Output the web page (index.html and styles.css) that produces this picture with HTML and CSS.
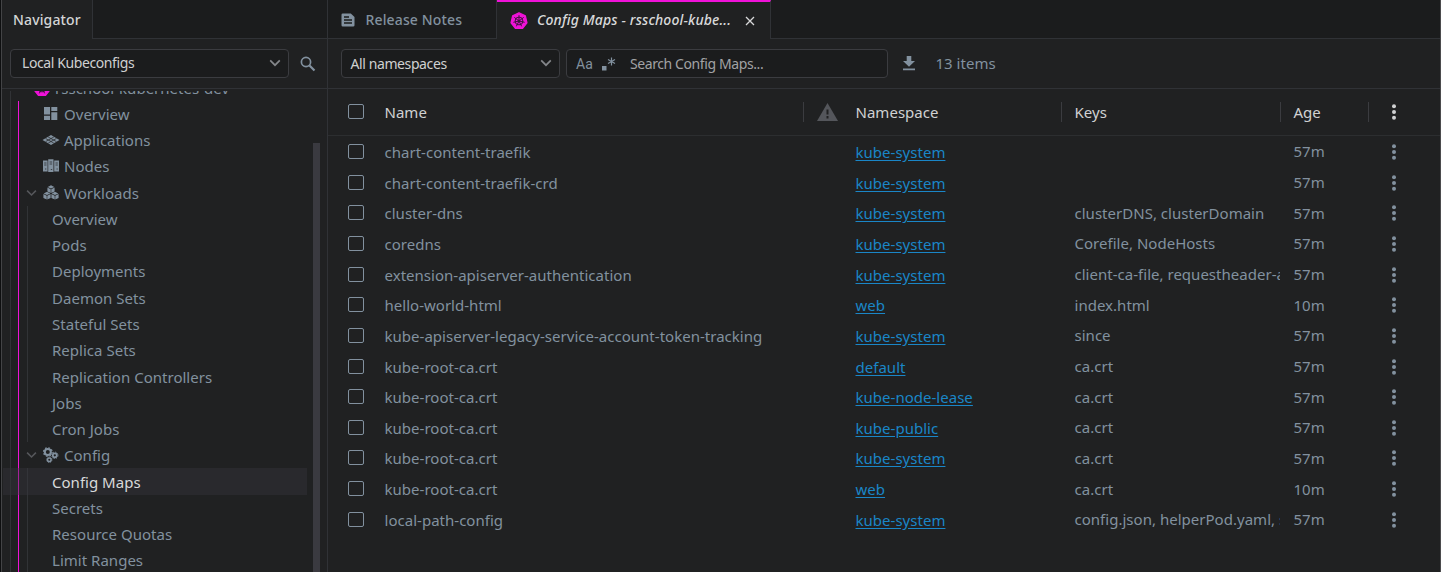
FILE: index.html
```html
<!DOCTYPE html>
<html lang="en">
<head>
<meta charset="utf-8">
<title>Config Maps</title>
<link rel="stylesheet" href="styles.css">
</head>
<body>
<svg class="defs" aria-hidden="true">
  <symbol id="chev" viewBox="0 0 12 8"><path d="M1.2 1.4 6 6.2l4.8-4.8" fill="none" stroke="currentColor" stroke-width="1.7"/></symbol>
  <symbol id="dots" viewBox="0 0 6 18"><g fill="currentColor"><circle cx="3" cy="3.2" r="2"/><circle cx="3" cy="9" r="2"/><circle cx="3" cy="14.8" r="2"/></g></symbol>
  <symbol id="helm" viewBox="0 0 18 18">
    <path d="M9 .8 15.4 3.9 17 10.8 12.6 16.4H5.4L1 10.8 2.6 3.9Z" fill="#f012d8" stroke="#f012d8" stroke-width="1.2" stroke-linejoin="round"/>
    <g fill="none" stroke="#3c123c" stroke-width="1"><circle cx="9" cy="9" r="3.9"/><circle cx="9" cy="9" r=".9"/><path d="M9 3.2V8M9 9l4.7-3.6M9 9l5.6 1.3M9 9l2.6 5.3M9 9l-2.6 5.3M9 9l-5.6 1.3M9 9 4.300 5.400"/></g>
  </symbol>
  <symbol id="cube" viewBox="0 0 8 9"><path d="M4 .2 7.500 2 4 3.800.5 2Z M.2 2.700 3.700 4.500V8.600L.2 6.800Z M7.800 2.700 4.300 4.500V8.600L7.800 6.800Z" fill="currentColor"/></symbol>
</svg>
<div class="app">
  <aside class="navigator">
    <div class="tabs"><div class="tab nav-tab">Navigator</div><div class="tab-fill"></div></div>
    <div class="toolbar nav-toolbar">
      <div class="field source"><span>Local Kubeconfigs</span><svg class="chev"><use href="#chev"/></svg></div>
      <svg class="search" viewBox="0 0 16 16"><g fill="none" stroke="currentColor"><circle cx="6" cy="6" r="4.600" stroke-width="1.700"/><path d="m9.500 9.500 5 5" stroke-width="2.200"/></g></svg>
    </div>
    <div class="tree">
      <div class="row cluster"><svg class="helm"><use href="#helm"/></svg><span>rsschool-kubernetes-dev</span></div>
      <div class="branch">
        <div class="row top"><svg viewBox="0 0 18 16"><path d="M2 1h6v7.500H2zM9.300 1h6v4h-6zM2 9.800h6v4.200H2zM9.300 6.300h6V14h-6z" fill="currentColor"/></svg><span>Overview</span></div>
        <div class="row top"><svg viewBox="0 0 18 16"><path d="M9 3 17.500 8 9 13 .5 8Z" fill="currentColor"/><path d="M3.500 6.400 11.700 11M6.200 5l8.200 4.600M14.500 6.400 6.300 11M11.800 5 3.600 9.600" stroke="#202122" stroke-width=".7"/></svg><span>Applications</span></div>
        <div class="row top"><svg viewBox="0 0 18 16"><path d="M1 2.500h4.600v11H1zM6.200 1.300h5.300v12.700H6.200zM12.200 2.500h4.800v11h-4.800z" fill="currentColor"/><path d="M2.200 5h2.300M2.200 7h2.300M7.600 4h2.600M7.600 6h2.600M13.500 5h2.300M13.500 7h2.300M3 11h1.300M8.800 11.500h1.400M14.500 11h1.300" stroke="#202122" stroke-width=".7"/></svg><span>Nodes</span></div>
        <div class="row top"><svg class="twist"><use href="#chev"/></svg><svg viewBox="0 0 18 16"><use href="#cube" x="5" y="0" width="8" height="8.500"/><use href="#cube" x="1" y="6.500" width="8" height="8.500"/><use href="#cube" x="9" y="6.500" width="8" height="8.500"/></svg><span>Workloads</span></div>
        <div class="sub">
          <div class="row">Overview</div>
          <div class="row">Pods</div>
          <div class="row">Deployments</div>
          <div class="row">Daemon Sets</div>
          <div class="row">Stateful Sets</div>
          <div class="row">Replica Sets</div>
          <div class="row">Replication Controllers</div>
          <div class="row">Jobs</div>
          <div class="row">Cron Jobs</div>
        </div>
        <div class="row top"><svg class="twist"><use href="#chev"/></svg><svg viewBox="0 0 18 16"><g fill="none" stroke="currentColor"><circle cx="5.800" cy="5" r="3" stroke-width="2"/><circle cx="5.800" cy="5" r="4.300" stroke-width="1.200" stroke-dasharray="1.700 1.677"/><circle cx="12.800" cy="8.300" r="2" stroke-width="1.700"/><circle cx="12.800" cy="8.300" r="3.200" stroke-width="1" stroke-dasharray="1.250 1.263"/><circle cx="7.300" cy="12.700" r="1.800" stroke-width="1.500"/><circle cx="7.300" cy="12.700" r="2.700" stroke-width=".9" stroke-dasharray="1.060 1.060"/></g></svg><span>Config</span></div>
        <div class="sub">
          <div class="row selected">Config Maps</div>
          <div class="row">Secrets</div>
          <div class="row">Resource Quotas</div>
          <div class="row">Limit Ranges</div>
        </div>
      </div>
      <div class="scrollbar"></div>
    </div>
  </aside>
  <main class="main">
    <div class="tabs">
      <div class="tab notes"><svg viewBox="0 0 14 14"><path d="M1.800.5h8L13.500 4v8.200a1.300 1.300 0 0 1-1.300 1.300H1.800A1.300 1.300 0 0 1 .5 12.200V1.800A1.300 1.300 0 0 1 1.800.5Z" fill="currentColor"/><path d="M3 4h5M3 7h8M3 10h8" stroke="#1b1c1d" stroke-width="1.300"/></svg><span>Release Notes</span></div>
      <div class="tab maps"><svg class="helm"><use href="#helm"/></svg><span>Config Maps - rsschool-kube...</span><svg class="close" viewBox="0 0 10 10"><path d="m1 1 8 8M9 1 1 9" stroke="currentColor" stroke-width="1.300"/></svg></div>
      <div class="tab-fill"></div>
    </div>
    <div class="toolbar">
      <div class="field ns"><span>All namespaces</span><svg class="chev"><use href="#chev"/></svg></div>
      <div class="field find"><span class="case">Aa</span><svg class="regex" viewBox="0 0 14 14"><path d="M0 9h4.500v4.500H0z" fill="currentColor"/><path d="M9.500.5v8M6 2.500l7 4M13 2.500l-7 4" stroke="currentColor" stroke-width="1.200"/></svg><span class="hint">Search Config Maps...</span></div>
      <svg class="download" viewBox="0 0 12 15"><path d="M3.700 0h4.600v5H12L6 10.700 0 5h3.700zM0 12.400h12v1.800H0z" fill="currentColor"/></svg>
      <span class="count">13 items</span>
    </div>
    <div class="line head"><i class="check"></i><span class="name">Name</span><span class="warn"><svg viewBox="0 0 21 18"><path d="M10.500 0 21 18H0Z" fill="#54565b"/><path d="M10.500 6.500v5M10.500 13v2.500" stroke="#202122" stroke-width="2"/></svg></span><span class="nsp">Namespace</span><span class="keys">Keys</span><span class="age">Age</span><span class="menu"><svg><use href="#dots"/></svg></span></div>
    <div class="body">
      <div class="line"><i class="check"></i><span class="name">chart-content-traefik</span><span class="warn"></span><a class="nsp">kube-system</a><span class="keys"></span><span class="age">57m</span><span class="menu"><svg><use href="#dots"/></svg></span></div>
      <div class="line"><i class="check"></i><span class="name">chart-content-traefik-crd</span><span class="warn"></span><a class="nsp">kube-system</a><span class="keys"></span><span class="age">57m</span><span class="menu"><svg><use href="#dots"/></svg></span></div>
      <div class="line"><i class="check"></i><span class="name">cluster-dns</span><span class="warn"></span><a class="nsp">kube-system</a><span class="keys">clusterDNS, clusterDomain</span><span class="age">57m</span><span class="menu"><svg><use href="#dots"/></svg></span></div>
      <div class="line"><i class="check"></i><span class="name">coredns</span><span class="warn"></span><a class="nsp">kube-system</a><span class="keys">Corefile, NodeHosts</span><span class="age">57m</span><span class="menu"><svg><use href="#dots"/></svg></span></div>
      <div class="line"><i class="check"></i><span class="name">extension-apiserver-authentication</span><span class="warn"></span><a class="nsp">kube-system</a><span class="keys">client-ca-file, requestheader-a</span><span class="age">57m</span><span class="menu"><svg><use href="#dots"/></svg></span></div>
      <div class="line"><i class="check"></i><span class="name">hello-world-html</span><span class="warn"></span><a class="nsp">web</a><span class="keys">index.html</span><span class="age">10m</span><span class="menu"><svg><use href="#dots"/></svg></span></div>
      <div class="line"><i class="check"></i><span class="name">kube-apiserver-legacy-service-account-token-tracking</span><span class="warn"></span><a class="nsp">kube-system</a><span class="keys">since</span><span class="age">57m</span><span class="menu"><svg><use href="#dots"/></svg></span></div>
      <div class="line"><i class="check"></i><span class="name">kube-root-ca.crt</span><span class="warn"></span><a class="nsp">default</a><span class="keys">ca.crt</span><span class="age">57m</span><span class="menu"><svg><use href="#dots"/></svg></span></div>
      <div class="line"><i class="check"></i><span class="name">kube-root-ca.crt</span><span class="warn"></span><a class="nsp">kube-node-lease</a><span class="keys">ca.crt</span><span class="age">57m</span><span class="menu"><svg><use href="#dots"/></svg></span></div>
      <div class="line"><i class="check"></i><span class="name">kube-root-ca.crt</span><span class="warn"></span><a class="nsp">kube-public</a><span class="keys">ca.crt</span><span class="age">57m</span><span class="menu"><svg><use href="#dots"/></svg></span></div>
      <div class="line"><i class="check"></i><span class="name">kube-root-ca.crt</span><span class="warn"></span><a class="nsp">kube-system</a><span class="keys">ca.crt</span><span class="age">57m</span><span class="menu"><svg><use href="#dots"/></svg></span></div>
      <div class="line"><i class="check"></i><span class="name">kube-root-ca.crt</span><span class="warn"></span><a class="nsp">web</a><span class="keys">ca.crt</span><span class="age">10m</span><span class="menu"><svg><use href="#dots"/></svg></span></div>
      <div class="line"><i class="check"></i><span class="name">local-path-config</span><span class="warn"></span><a class="nsp">kube-system</a><span class="keys">config.json, helperPod.yaml, s</span><span class="age">57m</span><span class="menu"><svg><use href="#dots"/></svg></span></div>
    </div>
  </main>
</div>
</body>
</html>
```
FILE: styles.css
```css
* { box-sizing: border-box; }
body { margin: 0; background: #202122; color: #82919f; font: 15px/20px "Noto Sans", sans-serif; letter-spacing: .02px; overflow: hidden; }
svg { display: block; flex: none; }
.defs { position: absolute; width: 0; height: 0; }
.app { display: flex; width: 1441px; height: 572px; padding-left: 1px; background: #0e0f10; }
.navigator { display: flex; flex-direction: column; width: 327px; border-left: 1px solid #434446; border-right: 1px solid #303236; background: #202122; }
.main { flex: 1; min-width: 0; background: #202122; border-right: 1px solid #4b4b4d; }
.tabs { display: flex; height: 39px; flex: none; }
.tab { display: flex; align-items: center; border-right: 1px solid #303236; font-size: 14px; font-weight: 500; letter-spacing: .14px; white-space: nowrap; }
.tab-fill { flex: 1; background: #1b1c1d; border-bottom: 1px solid #303236; }
.nav-tab { width: 91px; padding-left: 11px; color: #d4d5d6; }
.notes { width: 169px; padding: 2px 0 0 13px; gap: 10.5px; background: #1b1c1d; border-bottom: 1px solid #303236; }
.notes svg { width: 14px; height: 14px; }
.maps { width: 274px; padding: 0 0 2px 13px; border-top: 2px solid #f012d8; color: #d8d9da; font-style: italic; }
.helm { width: 18px; height: 18px; }
.maps .helm { position: relative; top: 1px; }
.maps span { margin: 0 14px 0 9px; }
.close { position: relative; top: 1px; width: 10px; height: 10px; }
.toolbar { display: flex; align-items: center; flex: none; height: 50px; padding-left: 13px; border-bottom: 1px solid #303236; }
.nav-toolbar { padding-left: 8px; }
.field { display: flex; align-items: center; height: 29px; border: 1px solid #3b3c40; border-radius: 4px; background: #1b1c1d; color: #cfd0d1; font-size: 14px; letter-spacing: -.4px; white-space: nowrap; }
.source { width: 279px; padding: 0 7px 0 11px; }
.source span { margin-top: -1px; }
.source .chev, .ns .chev { margin-left: auto; }
.chev { width: 12px; height: 8px; color: #84868a; }
.field .chev { margin-top: -2px; }
.search { width: 16px; height: 16px; margin-left: 11px; }
.ns { width: 219px; padding: 0 7px 0 8.5px; }
.find { width: 322px; margin-left: 6px; padding-left: 9px; }
.case { color: #82919f; font: 14px/20px Roboto, sans-serif; letter-spacing: .1px; margin-top: 1px; }
.regex { width: 14px; height: 14px; margin: 0 13.5px 0 9.5px; color: #82919f; }
.hint { color: #a1a2a4; }
.download { width: 12px; height: 15px; margin-left: 15px; }
.count { margin: -2px 0 0 20.5px; }
.tree { position: relative; flex: 1; overflow: hidden; border-top: 2px solid #202122; }
.tree::before { content: ""; position: absolute; left: 8px; top: 0; bottom: 0; width: 1px; background: #313336; }
.row { display: flex; align-items: center; height: 26.28px; white-space: nowrap; }
.cluster { margin-top: -16.5px; padding-left: 31px; gap: 4px; }
.branch { margin-left: 16px; border-left: 1px solid #f012d8; }
.top { position: relative; padding-left: 23px; gap: 4px; }
.top svg { width: 18px; height: 16px; }
.top .twist { position: absolute; left: 7px; width: 11px; height: 8px; color: #55575b; }
.sub { margin-left: 8px; border-left: 1px solid #313336; }
.sub .row { padding-left: 24px; }
.sub .selected { margin-left: -25px; width: 304px; padding-left: 49px; background: #37383e66; color: #d8d9da; }
.scrollbar { position: absolute; left: 311px; top: 52px; bottom: 0; width: 7px; background: #3a3a40; }
.line { display: grid; grid-template-columns: 56px 419px 52px 206px 219px 88px 1fr; align-items: center; height: 30.67px; white-space: nowrap; }
.head { height: 47px; color: #d0d1d2; border-bottom: 1px solid #2c2e30; }
.check { display: block; width: 16px; height: 15px; margin: -1px 0 0 20px; border: 1px solid #82919f; border-radius: 2px; }
.name { padding-left: .5px; }
.warn svg { width: 21px; height: 18px; margin-left: 13px; }
.head .warn, .head .keys, .head .age, .head .menu { display: flex; align-items: center; height: 20px; border-left: 1px solid #3b3c40; }
.head .nsp { color: inherit; text-decoration: none; }
.nsp { padding-left: .5px; color: #1a86c7; text-decoration: underline; text-underline-offset: 2px; }
.keys { overflow: hidden; padding-left: 13.5px; }
.age { padding-left: 13.5px; }
.body .keys, .body .age { margin-top: -1px; }
.menu svg { width: 6px; height: 18px; margin-left: 22.5px; }
.head .menu svg { margin-left: 21.5px; }
.head .keys, .head .age { padding-left: 12.5px; }
.body { padding-top: .6px; }
```
